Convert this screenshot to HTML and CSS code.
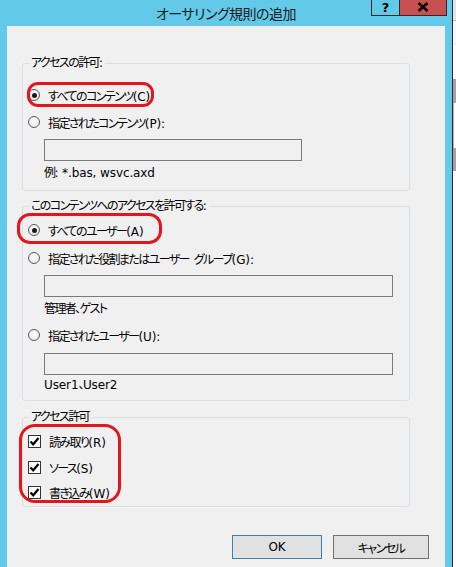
FILE: index.html
```html
<!DOCTYPE html>
<html lang="ja">
<head>
<meta charset="utf-8">
<title>オーサリング規則の追加</title>
<link rel="stylesheet" href="styles.css">
</head>
<body>
<div class="screen">
  <div class="window">
    <div class="titlebar">
      <span class="title">オーサリング規則の追加</span>
      <div class="caption-buttons">
        <span class="cap-btn help">?</span>
        <span class="cap-btn close">
          <svg width="12" height="10" viewBox="0 0 12 10"><path d="M1.5 1 L10.5 9 M10.5 1 L1.5 9" stroke="#000" stroke-width="2.4" fill="none"/></svg>
        </span>
      </div>
    </div>
    <div class="client">
      <fieldset class="group group-content">
        <legend>アクセスの許可<span class="en">:</span></legend>
        <div class="opt"><span class="radio checked"></span><span>すべてのコンテンツ<span class="en">(C)</span></span></div>
        <div class="opt opt-gap"><span class="radio"></span><span>指定されたコンテンツ<span class="en">(P):</span></span></div>
        <div class="textbox short"></div>
        <div class="hint">例<span class="en">: *.bas, wsvc.axd</span></div>
      </fieldset>

      <fieldset class="group group-users">
        <legend>このコンテンツへのアクセスを許可する<span class="en">:</span></legend>
        <div class="opt"><span class="radio checked"></span><span>すべてのユーザー<span class="en">(A)</span></span></div>
        <div class="opt opt-gap"><span class="radio"></span><span>指定された役割またはユーザー<span class="en sp"> </span>グループ<span class="en">(G):</span></span></div>
        <div class="textbox"></div>
        <div class="hint">管理者、ゲスト</div>
        <div class="opt opt-gap"><span class="radio"></span><span>指定されたユーザー<span class="en">(U):</span></span></div>
        <div class="textbox tb-gap"></div>
        <div class="hint hint-tight"><span class="en">User1</span>、<span class="en">User2</span></div>
      </fieldset>

      <fieldset class="group group-perms">
        <legend>アクセス許可</legend>
        <div class="opt"><span class="check"><svg width="11" height="11" viewBox="0 0 11 11"><path d="M1.5 5.5 L4.2 8.3 L9.5 2" stroke="#000" stroke-width="2.2" fill="none"/></svg></span><span>読み取り<span class="en">(R)</span></span></div>
        <div class="opt opt-gap6"><span class="check"><svg width="11" height="11" viewBox="0 0 11 11"><path d="M1.5 5.5 L4.2 8.3 L9.5 2" stroke="#000" stroke-width="2.2" fill="none"/></svg></span><span>ソース<span class="en">(S)</span></span></div>
        <div class="opt opt-gap5"><span class="check"><svg width="11" height="11" viewBox="0 0 11 11"><path d="M1.5 5.5 L4.2 8.3 L9.5 2" stroke="#000" stroke-width="2.2" fill="none"/></svg></span><span>書き込み<span class="en">(W)</span></span></div>
      </fieldset>

      <div class="actions">
        <button class="btn default"><span class="en">OK</span></button>
        <button class="btn cancel">キャンセル</button>
      </div>

      <!-- red highlight marks drawn over the form -->
      <span class="mark mark-content"></span>
      <span class="mark mark-users"></span>
      <span class="mark mark-perms"></span>
    </div>
  </div>
  <div class="behind">
    <span class="bh bh-top"></span>
    <span class="bh bh-line"></span>
    <span class="bh bh-white h34"></span>
    <span class="bh bh-grey h24"></span>
    <span class="bh bh-field"></span>
    <span class="bh bh-grey h23"></span>
    <span class="bh bh-rest"></span>
  </div>
</div>
</body>
</html>
```

FILE: styles.css
```css
* { box-sizing: border-box; }

html, body {
  margin: 0;
  padding: 0;
}

body {
  width: 456px;
  height: 567px;
  overflow: hidden;
  font-family: "DejaVu Sans", "Noto Sans CJK JP", sans-serif;
  font-feature-settings: "palt";
  font-size: 12px;
  letter-spacing: -1.6px;
  color: #000;
}

/* Latin runs keep their natural spacing */
.en {
  letter-spacing: -0.1px;
}

.en.sp {
  letter-spacing: 1px;
}

.screen {
  display: flex;
  width: 456px;
  height: 567px;
}

.window {
  width: 452px;
  height: 567px;
  background: #62c9e8;
  display: flex;
  flex-direction: column;
  flex: none;
}

.titlebar {
  position: relative;
  height: 26px;
  flex: none;
  display: flex;
  align-items: center;
  justify-content: center;
}

.title {
  font-size: 14px;
  letter-spacing: -0.5px;
  line-height: 20px;
  color: #1a1a1a;
  margin-top: 1px;
}

.caption-buttons {
  position: absolute;
  top: -1px;
  right: 5px;
  display: flex;
  height: 17px;
  border: 1px solid #2b2b2b;
  border-top: none;
  letter-spacing: 0;
}

.cap-btn {
  display: flex;
  align-items: center;
  justify-content: center;
  height: 16px;
}

.help {
  width: 28px;
  border-right: 1px solid #2b2b2b;
  font-family: "DejaVu Sans", sans-serif;
  font-weight: bold;
  font-size: 13px;
}

.close {
  width: 46px;
  background: #c75050;
}

.client {
  position: relative;
  margin-left: 7px;
  width: 438px;
  flex: 1;
  background: #f0f0f0;
  padding: 29px 0 0 15px;
  display: flex;
  flex-direction: column;
}

.group {
  margin: 0;
  width: 388px;
  border: 1px solid #d9dfe4;
  border-radius: 3px;
  padding: 0 0 0 5px;
}

.group legend {
  padding: 0 2px;
  margin-left: 1px;
  line-height: 16px;
  font-size: 12px;
}

.group-content { padding-top: 14px; padding-bottom: 9px; }
.group-users   { margin-top: 7px; padding-top: 6px; padding-bottom: 7px; }
.group-perms   { margin-top: 8px; padding-top: 6px; padding-bottom: 4px; }

.opt {
  display: flex;
  align-items: center;
  height: 20px;
  gap: 8px;
  white-space: nowrap;
}

.opt-gap  { margin-top: 7px; }
.group-users .opt-gap { margin-top: 8px; }
.opt-gap6 { margin-top: 6px; }
.opt-gap5 { margin-top: 5px; }

.radio {
  width: 12px;
  height: 12px;
  border-radius: 50%;
  border: 1px solid #5a5a5a;
  background: radial-gradient(circle at 50% 40%, #ffffff, #e2e2e2);
  display: flex;
  align-items: center;
  justify-content: center;
  flex: none;
}

.radio.checked::after {
  content: "";
  width: 5px;
  height: 5px;
  border-radius: 50%;
  background: #1a1a1a;
}

.check {
  width: 13px;
  height: 13px;
  border: 1px solid #333;
  background: #fbfbfb;
  display: flex;
  align-items: center;
  justify-content: center;
  flex: none;
}

.textbox {
  margin: 7px 0 0 16px;
  width: 349px;
  height: 22px;
  border: 1px solid #7a7a7a;
  background: #f0f0f0;
}

.textbox.short { width: 258px; }
.textbox.tb-gap { margin-top: 8px; }

.hint {
  margin: 4px 0 0 16px;
  line-height: 16px;
  white-space: nowrap;
}

.hint-tight { margin-top: 2px; }

.actions {
  display: flex;
  justify-content: flex-end;
  gap: 11px;
  margin-top: 28px;
  width: 407px;
}

.btn {
  height: 24px;
  font-family: inherit;
  font-feature-settings: "palt";
  font-size: 12px;
  letter-spacing: -1.5px;
  color: #000;
  background: #e1e1e1;
  border: 1px solid #707070;
  padding: 0;
}

.btn.default {
  width: 90px;
  border-color: #3c7fb1;
}

.btn.cancel { width: 96px; }

.mark {
  position: absolute;
  border: 3px solid #e3161e;
  pointer-events: none;
}

.mark-content {
  left: 20px;
  top: 56px;
  width: 127px;
  height: 25px;
  border-radius: 11px;
}

.mark-users {
  left: 10px;
  top: 187px;
  width: 145px;
  height: 31px;
  border-radius: 13px;
}

.mark-perms {
  left: 12px;
  top: 398px;
  width: 102px;
  height: 79px;
  border-radius: 16px;
}

/* sliver of the window underneath */
.behind {
  width: 4px;
  height: 567px;
  border-left: 1px solid #2b2b2b;
  display: flex;
  flex-direction: column;
  background: #fbfbfb;
}

.bh { display: block; flex: none; }
.bh-top { height: 20px; background: #e4e4e4; }
.bh-line { height: 25px; background: #f4f6fb; border-top: 1px solid #b9b9b9; }
.h34 { height: 34px; }
.bh-white { background: #fdfdfd; }
.h24 { height: 24px; }
.h23 { height: 23px; }
.bh-grey { background: #a3a3a3; }
.bh-field { height: 45px; background: #fdfdfd; border-left: 1px solid #b8b5a8; }
.bh-rest { flex: 1; background: #fdfdfd; }
```
